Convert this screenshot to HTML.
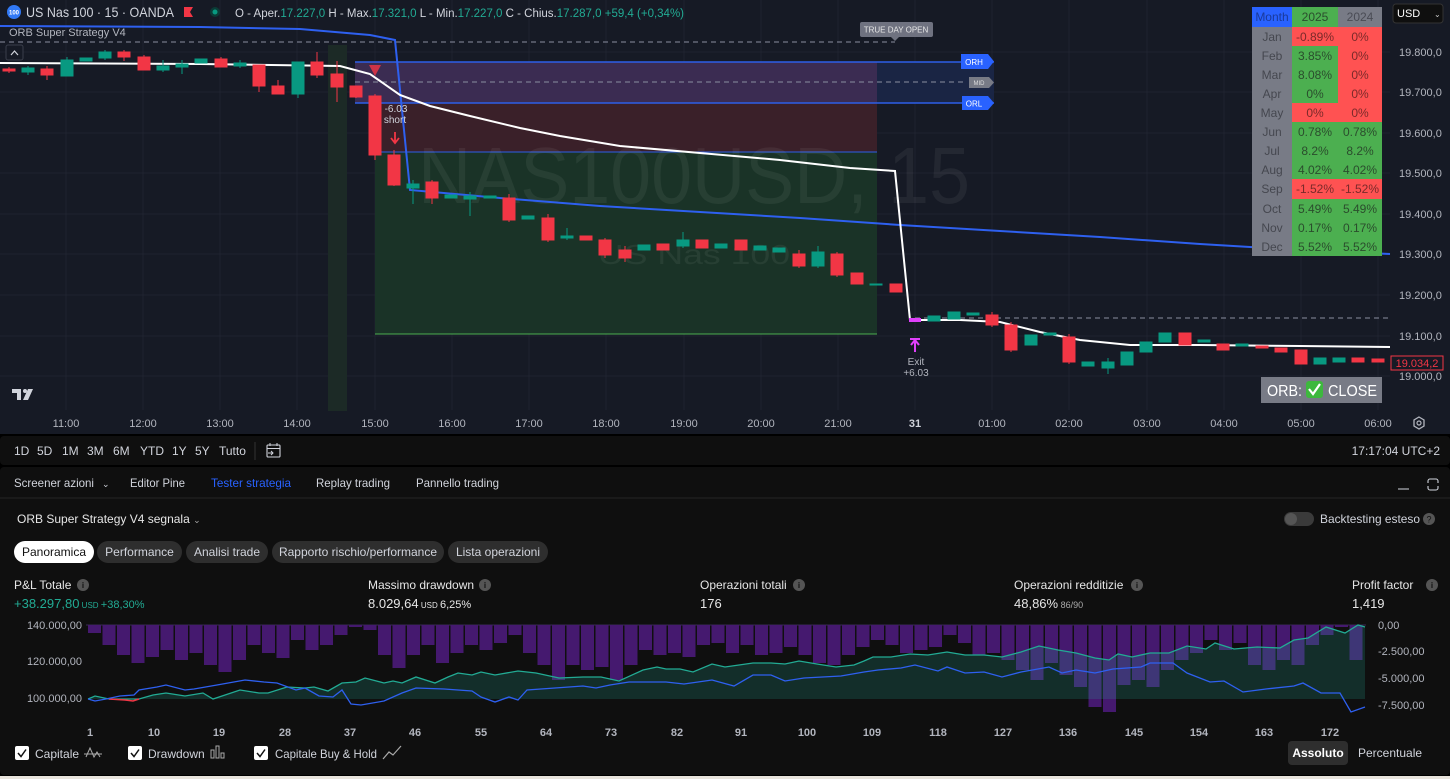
<!DOCTYPE html>
<html><head><meta charset="utf-8"><style>
html,body{margin:0;padding:0;background:#000;}
body{width:1450px;height:779px;overflow:hidden;position:relative;font-family:"Liberation Sans",sans-serif;}
svg{position:absolute;left:0;top:0;}
text{font-family:"Liberation Sans",sans-serif;}
</style></head><body>
<svg width="1450" height="779" viewBox="0 0 1450 779" xmlns="http://www.w3.org/2000/svg">
<rect x="0" y="0" width="1450" height="779" fill="#000"/>
<rect x="0" y="0" width="1450" height="434" fill="#161a25"/>
<rect x="0" y="436" width="1450" height="29" rx="4" fill="#0f0f0f"/>
<rect x="0" y="467" width="1450" height="308" rx="4" fill="#0f0f0f"/>
<rect x="0" y="776" width="1450" height="3" fill="#e8e4dc"/>
<line x1="0" y1="498" x2="1450" y2="498" stroke="#262626"/>

<g stroke="#1f2330" stroke-width="1">
<line x1="0" y1="52" x2="1390" y2="52"/><line x1="0" y1="92" x2="1390" y2="92"/><line x1="0" y1="133" x2="1390" y2="133"/><line x1="0" y1="173" x2="1390" y2="173"/><line x1="0" y1="214" x2="1390" y2="214"/><line x1="0" y1="254" x2="1390" y2="254"/><line x1="0" y1="295" x2="1390" y2="295"/><line x1="0" y1="336" x2="1390" y2="336"/><line x1="0" y1="376" x2="1390" y2="376"/>
<line x1="66" y1="0" x2="66" y2="410"/><line x1="143" y1="0" x2="143" y2="410"/><line x1="220" y1="0" x2="220" y2="410"/><line x1="297" y1="0" x2="297" y2="410"/><line x1="375" y1="0" x2="375" y2="410"/><line x1="452" y1="0" x2="452" y2="410"/><line x1="529" y1="0" x2="529" y2="410"/><line x1="606" y1="0" x2="606" y2="410"/><line x1="684" y1="0" x2="684" y2="410"/><line x1="761" y1="0" x2="761" y2="410"/><line x1="838" y1="0" x2="838" y2="410"/><line x1="915" y1="0" x2="915" y2="410"/><line x1="992" y1="0" x2="992" y2="410"/><line x1="1069" y1="0" x2="1069" y2="410"/><line x1="1147" y1="0" x2="1147" y2="410"/><line x1="1224" y1="0" x2="1224" y2="410"/><line x1="1301" y1="0" x2="1301" y2="410"/><line x1="1378" y1="0" x2="1378" y2="410"/>
</g>

<rect x="328" y="45" width="19" height="366" fill="#1c2a26"/>

<rect x="355" y="62" width="522" height="41" fill="#3b2c52"/>
<rect x="877" y="62" width="117" height="41" fill="#1a2544"/>
<rect x="375" y="103" width="502" height="49" fill="#3a2029"/>
<rect x="375" y="152" width="502" height="182" fill="#1a3327"/>
<line x1="355" y1="62" x2="994" y2="62" stroke="#2d5ee8" stroke-width="1.5"/>
<line x1="355" y1="103" x2="994" y2="103" stroke="#2d5ee8" stroke-width="1.5"/>
<line x1="355" y1="82" x2="965" y2="82" stroke="#8a8ea0" stroke-dasharray="5,4"/>
<line x1="375" y1="152" x2="877" y2="152" stroke="#2d5ee8" stroke-width="1"/>
<line x1="375" y1="334" x2="877" y2="334" stroke="#4caf50" stroke-width="1"/>
<line x1="0" y1="42" x2="895" y2="42" stroke="#8a8ea0" stroke-dasharray="5,4"/>
<line x1="915" y1="318" x2="1390" y2="318" stroke="#8a8ea0" stroke-dasharray="5,4"/>

<text x="418" y="203" font-size="80" fill="#ffffff" fill-opacity="0.06" textLength="552" lengthAdjust="spacingAndGlyphs">NAS100USD, 15</text>
<text x="598" y="264" font-size="28" fill="#ffffff" fill-opacity="0.06" textLength="192" lengthAdjust="spacingAndGlyphs">US Nas 100</text>

<path d="M0,26 L200,27 L300,29 L370,35 L395,40 L402,110 L410,190 L500,198 L600,206 L700,212 L800,218 L900,225 L1000,231 L1100,237 L1200,244 L1300,250 L1390,254" fill="none" stroke="#2e60f0" stroke-width="2"/>
<path d="M0,63 L200,64 L340,66 L370,74 L400,95 L430,106 L470,116 L520,128 L560,136 L620,146 L700,153 L780,160 L850,168 L895,171 L910,320 L960,320 L1000,322 L1040,332 L1080,340 L1130,345 L1200,345 L1300,346 L1390,347" fill="none" stroke="#ffffff" stroke-width="2"/>

<g stroke-width="1">
<g fill="#f23645" stroke="#f23645">
<line x1="9" y1="67" x2="9" y2="73"/><rect x="3" y="69" width="12" height="2"/>
<line x1="47" y1="66" x2="47" y2="80"/><rect x="41" y="69" width="12" height="6"/>
<line x1="124" y1="50" x2="124" y2="61"/><rect x="118" y="52" width="12" height="5"/>
<line x1="144" y1="55" x2="144" y2="70"/><rect x="138" y="57" width="12" height="13"/>
<line x1="221" y1="57" x2="221" y2="67"/><rect x="215" y="59" width="12" height="8"/>
<line x1="259" y1="65" x2="259" y2="92"/><rect x="253" y="65" width="12" height="21"/>
<line x1="278" y1="80" x2="278" y2="94"/><rect x="272" y="86" width="12" height="8"/>
<line x1="317" y1="52" x2="317" y2="78"/><rect x="311" y="62" width="12" height="13"/>
<line x1="337" y1="61" x2="337" y2="102"/><rect x="331" y="74" width="12" height="13"/>
<line x1="356" y1="86" x2="356" y2="98"/><rect x="350" y="86" width="12" height="11"/>
<line x1="375" y1="94" x2="375" y2="160"/><rect x="369" y="96" width="12" height="59"/>
<line x1="394" y1="150" x2="394" y2="186"/><rect x="388" y="155" width="12" height="30"/>
<line x1="432" y1="180" x2="432" y2="204"/><rect x="426" y="182" width="12" height="16"/>
<line x1="509" y1="194" x2="509" y2="222"/><rect x="503" y="198" width="12" height="22"/>
<line x1="548" y1="214" x2="548" y2="242"/><rect x="542" y="218" width="12" height="22"/>
<rect x="580" y="236" width="12" height="4"/>
<line x1="605" y1="238" x2="605" y2="258"/><rect x="599" y="240" width="12" height="15"/>
<line x1="625" y1="246" x2="625" y2="262"/><rect x="619" y="250" width="12" height="8"/>
<rect x="657" y="244" width="12" height="6"/>
<rect x="696" y="240" width="12" height="8"/>
<rect x="735" y="240" width="12" height="10"/>
<line x1="799" y1="250" x2="799" y2="268"/><rect x="793" y="254" width="12" height="12"/>
<line x1="837" y1="252" x2="837" y2="277"/><rect x="831" y="254" width="12" height="21"/>
<rect x="851" y="273" width="12" height="11"/>
<rect x="890" y="284" width="12" height="8"/>
<line x1="992" y1="312" x2="992" y2="327"/><rect x="986" y="315" width="12" height="10"/>
<line x1="1011" y1="322" x2="1011" y2="352"/><rect x="1005" y="325" width="12" height="25"/>
<line x1="1069" y1="334" x2="1069" y2="364"/><rect x="1063" y="337" width="12" height="25"/>
<rect x="1179" y="333" width="12" height="12"/>
<rect x="1217" y="344" width="12" height="6"/>
<rect x="1256" y="346" width="12" height="2"/>
<rect x="1275" y="348" width="12" height="4"/>
<rect x="1295" y="350" width="12" height="14"/>
<rect x="1352" y="358" width="12" height="4"/>
<rect x="1372" y="359" width="12" height="3"/>
</g>
<g fill="#089981" stroke="#089981">
<line x1="28" y1="66" x2="28" y2="75"/><rect x="22" y="68" width="12" height="4"/>
<line x1="67" y1="57" x2="67" y2="76"/><rect x="61" y="60" width="12" height="16"/>
<rect x="80" y="58" width="12" height="3"/>
<line x1="105" y1="50" x2="105" y2="60"/><rect x="99" y="52" width="12" height="6"/>
<line x1="163" y1="60" x2="163" y2="72"/><rect x="157" y="66" width="12" height="4"/>
<line x1="182" y1="60" x2="182" y2="74"/><rect x="176" y="64" width="12" height="3"/>
<rect x="195" y="59" width="12" height="4"/>
<line x1="240" y1="60" x2="240" y2="68"/><rect x="234" y="63" width="12" height="3"/>
<line x1="298" y1="62" x2="298" y2="98"/><rect x="292" y="62" width="12" height="32"/>
<line x1="413" y1="180" x2="413" y2="204"/><rect x="407" y="184" width="12" height="4"/>
<rect x="445" y="195" width="12" height="3"/>
<line x1="470" y1="192" x2="470" y2="216"/><rect x="464" y="196" width="12" height="3"/>
<rect x="484" y="196" width="12" height="2"/>
<rect x="522" y="216" width="12" height="3"/>
<line x1="567" y1="228" x2="567" y2="240"/><rect x="561" y="236" width="12" height="2"/>
<rect x="638" y="245" width="12" height="5"/>
<line x1="683" y1="232" x2="683" y2="248"/><rect x="677" y="240" width="12" height="6"/>
<rect x="715" y="244" width="12" height="4"/>
<rect x="754" y="246" width="12" height="4"/>
<rect x="773" y="248" width="12" height="4"/>
<line x1="818" y1="246" x2="818" y2="268"/><rect x="812" y="252" width="12" height="14"/>
<rect x="870" y="284" width="12" height="1"/>
<rect x="928" y="316" width="12" height="5"/>
<rect x="948" y="312" width="12" height="7"/>
<rect x="967" y="313" width="12" height="2"/>
<rect x="1025" y="335" width="12" height="10"/>
<rect x="1044" y="333" width="12" height="2"/>
<rect x="1082" y="362" width="12" height="4"/>
<line x1="1108" y1="358" x2="1108" y2="374"/><rect x="1102" y="362" width="12" height="6"/>
<rect x="1121" y="352" width="12" height="13"/>
<rect x="1140" y="342" width="12" height="10"/>
<rect x="1159" y="333" width="12" height="9"/>
<rect x="1198" y="340" width="12" height="2"/>
<rect x="1236" y="344" width="12" height="2"/>
<rect x="1314" y="358" width="12" height="6"/>
<rect x="1333" y="358" width="12" height="4"/>
</g>
<rect x="909" y="318" width="12" height="4" fill="#e040fb"/>
</g>

<path d="M369,65 L381,65 L375,76 Z" fill="#f23645" fill-opacity="0.8"/>
<text x="396" y="112" font-size="10" fill="#d1d4dc" text-anchor="middle">-6.03</text>
<text x="395" y="123" font-size="10" fill="#d1d4dc" text-anchor="middle">short</text>
<path d="M395,132 L395,142 M391,138 L395,143 L399,138" stroke="#f23645" stroke-width="1.8" fill="none"/>
<path d="M915,352 L915,341 M911,345 L915,340 L919,345 M910,339 L920,339" stroke="#e040fb" stroke-width="2" fill="none"/>
<text x="916" y="365" font-size="10" fill="#b2b5be" text-anchor="middle">Exit</text>
<text x="916" y="376" font-size="10" fill="#b2b5be" text-anchor="middle">+6.03</text>

<rect x="860" y="22" width="73" height="15" rx="2" fill="#6f7280"/>
<path d="M891,37 L899,37 L895,41 Z" fill="#6f7280"/>
<text x="896" y="32.5" font-size="8" fill="#e6e6e6" text-anchor="middle">TRUE DAY OPEN</text>
<path d="M961,54 L988,54 L994,61.5 L988,69 L961,69 Z" fill="#2962ff"/>
<text x="974" y="65" font-size="8" fill="#fff" text-anchor="middle">ORH</text>
<path d="M969,77 L989,77 L994,82.5 L989,88 L969,88 Z" fill="#787b86"/>
<text x="979" y="85" font-size="6" fill="#ddd" text-anchor="middle">MID</text>
<path d="M962,96 L988,96 L994,103 L988,110 L962,110 Z" fill="#2962ff"/>
<text x="974" y="106.5" font-size="8" fill="#fff" text-anchor="middle">ORL</text>

<g font-size="11" fill="#b2b5be">
<text x="1399" y="56">19.800,0</text><text x="1399" y="96">19.700,0</text><text x="1399" y="137">19.600,0</text><text x="1399" y="177">19.500,0</text><text x="1399" y="218">19.400,0</text><text x="1399" y="258">19.300,0</text><text x="1399" y="299">19.200,0</text><text x="1399" y="340">19.100,0</text><text x="1399" y="380">19.000,0</text>
</g>
<rect x="1391" y="356" width="52" height="14" fill="#161a25" stroke="#f23645"/>
<text x="1417" y="367" font-size="11" fill="#f23645" text-anchor="middle">19.034,2</text>
<rect x="1393" y="4" width="50" height="19" rx="3" fill="#0f0f0f" stroke="#333"/>
<text x="1397" y="17" font-size="11" fill="#fff">USD</text>
<text x="1434" y="17" font-size="8" fill="#ccc">⌄</text>

<g font-size="11" fill="#b2b5be" text-anchor="middle">
<text x="66" y="427">11:00</text><text x="143" y="427">12:00</text><text x="220" y="427">13:00</text><text x="297" y="427">14:00</text><text x="375" y="427">15:00</text><text x="452" y="427">16:00</text><text x="529" y="427">17:00</text><text x="606" y="427">18:00</text><text x="684" y="427">19:00</text><text x="761" y="427">20:00</text><text x="838" y="427">21:00</text><text x="915" y="427" font-weight="bold" fill="#d1d4dc">31</text><text x="992" y="427">01:00</text><text x="1069" y="427">02:00</text><text x="1147" y="427">03:00</text><text x="1224" y="427">04:00</text><text x="1301" y="427">05:00</text><text x="1378" y="427">06:00</text>
</g>
<path d="M1419,417 L1424,420 L1424,426 L1419,429 L1414,426 L1414,420 Z" fill="none" stroke="#b2b5be" stroke-width="1.3"/><circle cx="1419" cy="423" r="2" fill="none" stroke="#b2b5be" stroke-width="1.2"/>

<path d="M12,389 L21,389 L21,400 L17,400 L17,393 L12,393 Z" fill="#d1d4dc"/><circle cx="25" cy="391" r="2" fill="#d1d4dc"/><path d="M28,389 L33,389 L28,400 L23,400 Z" fill="#d1d4dc"/>

<circle cx="14" cy="12" r="7" fill="#3179f5"/>
<text x="14" y="14.5" font-size="6" fill="#fff" text-anchor="middle" font-weight="bold">100</text>
<text x="26" y="17" font-size="14" fill="#d1d4dc" textLength="148" lengthAdjust="spacingAndGlyphs">US Nas 100 · 15 · OANDA</text>
<path d="M184,7 L193,7 L190,12 L193,17 L184,17 Z" fill="#f23645"/>
<circle cx="215" cy="12" r="5" fill="#0b3b36"/><circle cx="215" cy="12" r="2.5" fill="#089981"/>
<text x="235" y="17" font-size="11.5" fill="#d1d4dc">O - Aper.<tspan fill="#22ab94">17.227,0</tspan>  H - Max.<tspan fill="#22ab94">17.321,0</tspan>  L - Min.<tspan fill="#22ab94">17.227,0</tspan>  C - Chius.<tspan fill="#22ab94">17.287,0</tspan> <tspan fill="#22ab94"> +59,4 (+0,34%)</tspan></text>
<text x="9" y="36" font-size="11" fill="#b2b5be">ORB Super Strategy V4</text>
<rect x="6" y="45" width="17" height="15" rx="2" fill="#161a25" stroke="#3a3e4a"/>
<path d="M11,55 L14.5,51 L18,55" fill="none" stroke="#d1d4dc" stroke-width="1.2"/>

<g font-size="12" text-anchor="middle">
<rect x="1252" y="7" width="40" height="20" fill="#2962ff"/><rect x="1292" y="7" width="46" height="20" fill="#4caf50"/><rect x="1338" y="7" width="44" height="20" fill="#787b86"/>
<rect x="1252" y="27" width="40" height="229" fill="#787b86"/>
<rect x="1292" y="27" width="46" height="19" fill="#ff5252"/><rect x="1338" y="27" width="44" height="95" fill="#ff5252"/>
<rect x="1292" y="46" width="46" height="57" fill="#4caf50"/><rect x="1292" y="103" width="46" height="19" fill="#ff5252"/>
<rect x="1292" y="122" width="90" height="57" fill="#4caf50"/><rect x="1292" y="179" width="90" height="20" fill="#ff5252"/><rect x="1292" y="199" width="90" height="57" fill="#4caf50"/>
<text x="1272" y="21" fill="#1a3a9a">Month</text><text x="1315" y="21" fill="#2b4d2d">2025</text><text x="1360" y="21" fill="#4a4c55">2024</text>
<g fill="#45474f"><text x="1272" y="41">Jan</text><text x="1272" y="60">Feb</text><text x="1272" y="79">Mar</text><text x="1272" y="98">Apr</text><text x="1272" y="117">May</text><text x="1272" y="136">Jun</text><text x="1272" y="155">Jul</text><text x="1272" y="174">Aug</text><text x="1272" y="193">Sep</text><text x="1272" y="213">Oct</text><text x="1272" y="232">Nov</text><text x="1272" y="251">Dec</text></g>
<g fill="#7a2a2a"><text x="1315" y="41">-0.89%</text><text x="1360" y="41">0%</text><text x="1360" y="60">0%</text><text x="1360" y="79">0%</text><text x="1360" y="98">0%</text><text x="1315" y="117">0%</text><text x="1360" y="117">0%</text><text x="1315" y="193">-1.52%</text><text x="1360" y="193">-1.52%</text></g>
<g fill="#2b4d2d"><text x="1315" y="60">3.85%</text><text x="1315" y="79">8.08%</text><text x="1315" y="98">0%</text><text x="1315" y="136">0.78%</text><text x="1360" y="136">0.78%</text><text x="1315" y="155">8.2%</text><text x="1360" y="155">8.2%</text><text x="1315" y="174">4.02%</text><text x="1360" y="174">4.02%</text><text x="1315" y="213">5.49%</text><text x="1360" y="213">5.49%</text><text x="1315" y="232">0.17%</text><text x="1360" y="232">0.17%</text><text x="1315" y="251">5.52%</text><text x="1360" y="251">5.52%</text></g>
</g>

<rect x="1261" y="377" width="121" height="26" fill="#787b86"/>
<text x="1267" y="396" font-size="16" fill="#fff" textLength="35" lengthAdjust="spacingAndGlyphs">ORB:</text>
<rect x="1306" y="381" width="17" height="17" rx="3" fill="#3db83d"/>
<path d="M1309,389 L1313,394 L1320,384" fill="none" stroke="#fff" stroke-width="2.2"/>
<text x="1328" y="396" font-size="16" fill="#fff" textLength="49" lengthAdjust="spacingAndGlyphs">CLOSE</text>

<g font-size="12" fill="#d1d4dc">
<text x="14" y="455">1D</text><text x="37" y="455">5D</text><text x="62" y="455">1M</text><text x="87" y="455">3M</text><text x="113" y="455">6M</text><text x="140" y="455">YTD</text><text x="172" y="455">1Y</text><text x="195" y="455">5Y</text><text x="219" y="455">Tutto</text>
<text x="1440" y="455" text-anchor="end">17:17:04 UTC+2</text>
</g>
<line x1="255" y1="442" x2="255" y2="460" stroke="#333"/>
<rect x="267" y="445" width="13" height="12" rx="1" fill="none" stroke="#d1d4dc" stroke-width="1.1"/><line x1="267" y1="448.5" x2="280" y2="448.5" stroke="#d1d4dc"/><path d="M270,443 v3 M277,443 v3 M268,453 h5 M271,451 l2,2 l-2,2" stroke="#d1d4dc" fill="none"/>

<g font-size="12" fill="#d1d4dc">
<text x="14" y="487" textLength="80" lengthAdjust="spacingAndGlyphs">Screener azioni</text><text x="102" y="487" font-size="9">⌄</text>
<text x="130" y="487" textLength="55" lengthAdjust="spacingAndGlyphs">Editor Pine</text>
<text x="211" y="487" fill="#2962ff" textLength="80" lengthAdjust="spacingAndGlyphs">Tester strategia</text>
<text x="316" y="487" textLength="74" lengthAdjust="spacingAndGlyphs">Replay trading</text>
<text x="416" y="487" textLength="83" lengthAdjust="spacingAndGlyphs">Pannello trading</text>
</g>
<line x1="1398" y1="489" x2="1409" y2="489" stroke="#d1d4dc"/>
<path d="M1428,483 v-2 a2,2 0 0 1 2,-2 h6 a2,2 0 0 1 2,2 v2 M1428,486 v2 a2,2 0 0 0 2,2 h6 a2,2 0 0 0 2,-2 v-2" fill="none" stroke="#d1d4dc" stroke-width="1.1"/>

<text x="17" y="523" font-size="12" fill="#e6e6e6">ORB Super Strategy V4 segnala <tspan font-size="9" fill="#aaa">⌄</tspan></text>
<rect x="1284" y="512" width="30" height="14" rx="7" fill="#3a3a3a"/><circle cx="1291" cy="519" r="6" fill="#555"/>
<text x="1320" y="523" font-size="12" fill="#d1d4dc" textLength="100" lengthAdjust="spacingAndGlyphs">Backtesting esteso</text>
<circle cx="1429" cy="519" r="6" fill="#555"/><text x="1429" y="522.5" font-size="9" fill="#111" text-anchor="middle">?</text>

<rect x="14" y="541" width="80" height="22" rx="11" fill="#ffffff"/>
<rect x="97" y="541" width="85" height="22" rx="11" fill="#2e2e2e"/>
<rect x="186" y="541" width="82" height="22" rx="11" fill="#2e2e2e"/>
<rect x="272" y="541" width="172" height="22" rx="11" fill="#2e2e2e"/>
<rect x="448" y="541" width="100" height="22" rx="11" fill="#2e2e2e"/>
<g font-size="12" fill="#d1d4dc" text-anchor="middle">
<text x="54" y="556" fill="#111">Panoramica</text><text x="139.5" y="556">Performance</text><text x="227" y="556">Analisi trade</text><text x="358" y="556">Rapporto rischio/performance</text><text x="498" y="556">Lista operazioni</text>
</g>

<g font-size="12" fill="#e6e6e6">
<text x="14" y="589">P&amp;L Totale</text><text x="368" y="589">Massimo drawdown</text><text x="700" y="589">Operazioni totali</text><text x="1014" y="589">Operazioni redditizie</text><text x="1352" y="589">Profit factor</text>
</g>
<g fill="#555"><circle cx="83" cy="585" r="6"/><circle cx="485" cy="585" r="6"/><circle cx="799" cy="585" r="6"/><circle cx="1137" cy="585" r="6"/><circle cx="1432" cy="585" r="6"/></g>
<g font-size="8" fill="#111" text-anchor="middle" font-weight="bold"><text x="83" y="588">i</text><text x="485" y="588">i</text><text x="799" y="588">i</text><text x="1137" y="588">i</text><text x="1432" y="588">i</text></g>
<text x="14" y="608" font-size="13" fill="#22ab94">+38.297,80<tspan font-size="8"> USD </tspan><tspan font-size="11">+38,30%</tspan></text>
<text x="368" y="608" font-size="13" fill="#e6e6e6">8.029,64<tspan font-size="8"> USD </tspan><tspan font-size="11">6,25%</tspan></text>
<text x="700" y="608" font-size="13" fill="#e6e6e6">176</text>
<text x="1014" y="608" font-size="13" fill="#e6e6e6">48,86%<tspan font-size="9" fill="#aaa"> 86/90</tspan></text>
<text x="1352" y="608" font-size="13" fill="#e6e6e6">1,419</text>

<g font-size="11" fill="#b2b5be">
<text x="82" y="629" text-anchor="end">140.000,00</text><text x="82" y="665" text-anchor="end">120.000,00</text><text x="82" y="702" text-anchor="end">100.000,00</text>
<text x="1378" y="629">0,00</text><text x="1378" y="655">-2.500,00</text><text x="1378" y="682">-5.000,00</text><text x="1378" y="709">-7.500,00</text>
</g>
<line x1="86" y1="625" x2="1366" y2="625" stroke="#3a2a55"/>
<g fill="#45196f">
<rect x="88" y="625" width="13" height="8"/><rect x="102.5" y="625" width="13" height="20"/><rect x="117" y="625" width="13" height="30"/><rect x="131.5" y="625" width="13" height="38"/><rect x="146" y="625" width="13" height="32"/><rect x="160.5" y="625" width="13" height="25"/><rect x="175" y="625" width="13" height="35"/><rect x="189.5" y="625" width="13" height="28"/><rect x="204" y="625" width="13" height="40"/><rect x="218.5" y="625" width="13" height="47"/><rect x="233" y="625" width="13" height="35"/><rect x="247.5" y="625" width="13" height="20"/><rect x="262" y="625" width="13" height="28"/><rect x="276.5" y="625" width="13" height="33"/><rect x="291" y="625" width="13" height="15"/><rect x="305.5" y="625" width="13" height="25"/><rect x="320" y="625" width="13" height="20"/><rect x="334.5" y="625" width="13" height="10"/><rect x="349" y="625" width="13" height="2"/><rect x="363.5" y="625" width="13" height="5"/><rect x="378" y="625" width="13" height="30"/><rect x="392.5" y="625" width="13" height="43"/><rect x="407" y="625" width="13" height="30"/><rect x="421.5" y="625" width="13" height="20"/><rect x="436" y="625" width="13" height="38"/><rect x="450.5" y="625" width="13" height="28"/><rect x="465" y="625" width="13" height="20"/><rect x="479.5" y="625" width="13" height="25"/><rect x="494" y="625" width="13" height="18"/><rect x="508.5" y="625" width="13" height="10"/><rect x="523" y="625" width="13" height="28"/><rect x="537.5" y="625" width="13" height="40"/><rect x="552" y="625" width="13" height="55"/><rect x="566.5" y="625" width="13" height="40"/><rect x="581" y="625" width="13" height="45"/><rect x="595.5" y="625" width="13" height="42"/><rect x="610" y="625" width="13" height="55"/><rect x="624.5" y="625" width="13" height="40"/><rect x="639" y="625" width="13" height="25"/><rect x="653.5" y="625" width="13" height="30"/><rect x="668" y="625" width="13" height="28"/><rect x="682.5" y="625" width="13" height="32"/><rect x="697" y="625" width="13" height="20"/><rect x="711.5" y="625" width="13" height="18"/><rect x="726" y="625" width="13" height="28"/><rect x="740.5" y="625" width="13" height="20"/><rect x="755" y="625" width="13" height="30"/><rect x="769.5" y="625" width="13" height="28"/><rect x="784" y="625" width="13" height="22"/><rect x="798.5" y="625" width="13" height="30"/><rect x="813" y="625" width="13" height="38"/><rect x="827.5" y="625" width="13" height="40"/><rect x="842" y="625" width="13" height="30"/><rect x="856.5" y="625" width="13" height="22"/><rect x="871" y="625" width="13" height="15"/><rect x="885.5" y="625" width="13" height="20"/><rect x="900" y="625" width="13" height="28"/><rect x="914.5" y="625" width="13" height="25"/><rect x="929" y="625" width="13" height="22"/><rect x="943.5" y="625" width="13" height="10"/><rect x="958" y="625" width="13" height="18"/><rect x="972.5" y="625" width="13" height="30"/><rect x="987" y="625" width="13" height="28"/><rect x="1001.5" y="625" width="13" height="35"/><rect x="1016" y="625" width="13" height="45"/><rect x="1030.5" y="625" width="13" height="55"/><rect x="1045" y="625" width="13" height="38"/><rect x="1059.5" y="625" width="13" height="50"/><rect x="1074" y="625" width="13" height="62"/><rect x="1088.5" y="625" width="13" height="82"/><rect x="1103" y="625" width="13" height="87"/><rect x="1117.5" y="625" width="13" height="60"/><rect x="1132" y="625" width="13" height="55"/><rect x="1146.5" y="625" width="13" height="62"/><rect x="1161" y="625" width="13" height="45"/><rect x="1175.5" y="625" width="13" height="35"/><rect x="1190" y="625" width="13" height="28"/><rect x="1204.5" y="625" width="13" height="15"/><rect x="1219" y="625" width="13" height="25"/><rect x="1233.5" y="625" width="13" height="18"/><rect x="1248" y="625" width="13" height="40"/><rect x="1262.5" y="625" width="13" height="45"/><rect x="1277" y="625" width="13" height="35"/><rect x="1291.5" y="625" width="13" height="40"/><rect x="1306" y="625" width="13" height="20"/><rect x="1320.5" y="625" width="13" height="10"/><rect x="1335" y="625" width="13" height="2"/><rect x="1349.5" y="625" width="13" height="35"/>
</g>
<path d="M88,699 L95,696 L109,699 L139,699 L153,695 L166,693 L185,696 L203,693 L213,699 L240,690 L259,693 L268,693 L287,687 L305,688 L314,687 L328,691 L342,683 L356,682 L365,678 L384,683 L393,681 L402,683 L416,677 L435,683 L448,677 L458,673 L472,675 L481,672 L495,675 L518,671 L536,673 L559,678 L583,677 L601,677 L619,681 L643,670 L657,667 L666,669 L680,669 L693,672 L712,664 L725,667 L753,663 L771,663 L785,664 L799,661 L817,664 L836,667 L854,665 L864,661 L873,657 L891,657 L910,654 L928,655 L947,652 L965,655 L984,655 L1002,657 L1021,652 L1039,646 L1058,650 L1076,653 L1095,658 L1109,660 L1118,654 L1132,657 L1150,653 L1169,653 L1187,646 L1206,649 L1215,643 L1234,649 L1257,647 L1280,648 L1294,640 L1308,638 L1326,627 L1345,633 L1358,625 L1365,627 L1365,699 Z" fill="#22ab94" fill-opacity="0.2"/>
<path d="M88,699 L95,696 L109,699 L139,699 L153,695 L166,693 L185,696 L203,693 L213,699 L240,690 L259,693 L268,693 L287,687 L305,688 L314,687 L328,691 L342,683 L356,682 L365,678 L384,683 L393,681 L402,683 L416,677 L435,683 L448,677 L458,673 L472,675 L481,672 L495,675 L518,671 L536,673 L559,678 L583,677 L601,677 L619,681 L643,670 L657,667 L666,669 L680,669 L693,672 L712,664 L725,667 L753,663 L771,663 L785,664 L799,661 L817,664 L836,667 L854,665 L864,661 L873,657 L891,657 L910,654 L928,655 L947,652 L965,655 L984,655 L1002,657 L1021,652 L1039,646 L1058,650 L1076,653 L1095,658 L1109,660 L1118,654 L1132,657 L1150,653 L1169,653 L1187,646 L1206,649 L1215,643 L1234,649 L1257,647 L1280,648 L1294,640 L1308,638 L1326,627 L1345,633 L1358,625 L1365,627" fill="none" stroke="#22ab94" stroke-width="1.3"/>
<path d="M109,699 L125,700 L133,701 L139,699" fill="none" stroke="#f23645" stroke-width="1.5"/>
<path d="M88,699 L95,701 L106,699 L120,696 L134,695 L139,690 L157,687 L166,685 L185,690 L194,689 L217,685 L245,680 L264,682 L277,683 L296,690 L305,688 L319,696 L333,697 L342,690 L351,704 L361,705 L384,701 L402,693 L416,688 L444,689 L472,691 L481,697 L495,702 L509,697 L518,700 L527,690 L555,688 L583,686 L596,688 L610,685 L629,682 L647,682 L666,682 L684,684 L712,680 L734,686 L753,675 L771,675 L785,681 L804,678 L841,676 L864,672 L878,670 L901,668 L915,665 L938,671 L947,667 L965,673 L984,672 L1002,677 L1021,672 L1049,667 L1062,673 L1076,670 L1095,673 L1113,669 L1141,667 L1150,663 L1173,663 L1187,673 L1210,682 L1224,681 L1243,692 L1266,689 L1294,686 L1303,683 L1321,693 L1340,693 L1351,712 L1365,707" fill="none" stroke="#2e60f0" stroke-width="1.3"/>

<g font-size="11" fill="#b2b5be" text-anchor="middle" font-weight="bold">
<text x="90" y="736">1</text><text x="154" y="736">10</text><text x="219" y="736">19</text><text x="285" y="736">28</text><text x="350" y="736">37</text><text x="415" y="736">46</text><text x="481" y="736">55</text><text x="546" y="736">64</text><text x="611" y="736">73</text><text x="677" y="736">82</text><text x="741" y="736">91</text><text x="807" y="736">100</text><text x="872" y="736">109</text><text x="938" y="736">118</text><text x="1003" y="736">127</text><text x="1068" y="736">136</text><text x="1134" y="736">145</text><text x="1199" y="736">154</text><text x="1264" y="736">163</text><text x="1330" y="736">172</text>
</g>

<g>
<rect x="15" y="746" width="14" height="14" rx="2" fill="#fff"/><path d="M18,753 L21,756.5 L26,749.5" stroke="#111" stroke-width="1.5" fill="none"/>
<rect x="128" y="746" width="14" height="14" rx="2" fill="#fff"/><path d="M131,753 L134,756.5 L139,749.5" stroke="#111" stroke-width="1.5" fill="none"/>
<rect x="254" y="746" width="14" height="14" rx="2" fill="#fff"/><path d="M257,753 L260,756.5 L265,749.5" stroke="#111" stroke-width="1.5" fill="none"/>
</g>
<g font-size="12" fill="#d1d4dc"><text x="35" y="758">Capitale</text><text x="148" y="758">Drawdown</text><text x="275" y="758" textLength="102" lengthAdjust="spacingAndGlyphs">Capitale Buy &amp; Hold</text></g>
<path d="M84,754 L102,754 M86,757 L90,748 L94,757 L97,752 L100,757" stroke="#aaa" fill="none"/>
<path d="M211,750 h3 v8 h-3 Z M216,746 h3 v12 h-3 Z M221,753 h3 v5 h-3 Z" stroke="#aaa" fill="none"/>
<path d="M383,759 L389,752 L393,755 L401,746" stroke="#aaa" fill="none" stroke-width="1.2"/>
<rect x="1288" y="741" width="60" height="24" rx="4" fill="#2e2e2e"/>
<text x="1318" y="757" font-size="12" fill="#fff" text-anchor="middle" font-weight="bold">Assoluto</text>
<text x="1358" y="757" font-size="12" fill="#d1d4dc">Percentuale</text>
</svg>
</body></html>
